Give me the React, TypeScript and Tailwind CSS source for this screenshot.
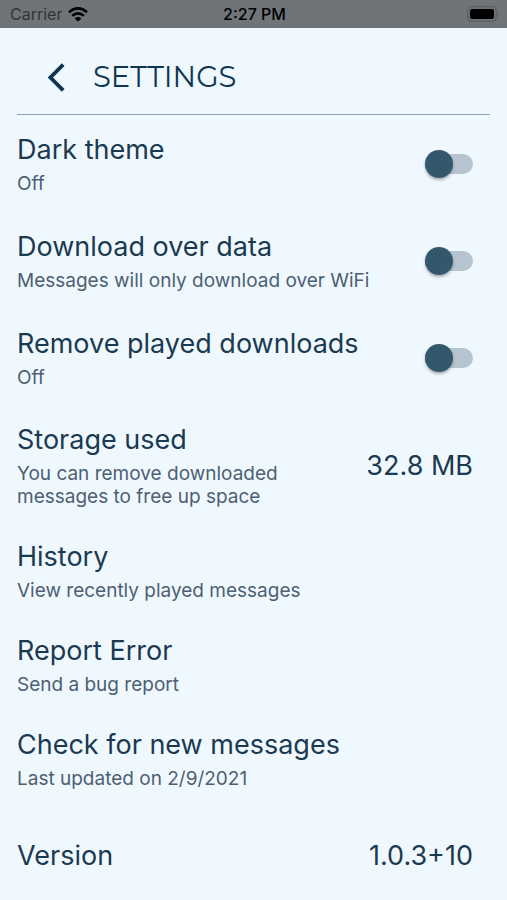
import { useState } from "react";

type RowProps = { title: string; subtitle: string };

function RowText({ title, subtitle }: RowProps) {
  return (
    <span className="flex flex-col gap-1.5">
      <span className="text-[27px] leading-[33px] text-[#1b3a50]">{title}</span>
      <span className="text-[19px] leading-[23px] text-[#4c6072]">{subtitle}</span>
    </span>
  );
}

function SwitchRow({ title, subtitle }: RowProps) {
  const [on, setOn] = useState(false);
  return (
    <label className="flex min-h-[97px] cursor-pointer items-center justify-between gap-4 pr-[17px]">
      <RowText title={title} subtitle={subtitle} />
      <span className="relative flex h-7 w-12 shrink-0 items-center">
        <input
          type="checkbox"
          role="switch"
          checked={on}
          onChange={() => setOn(!on)}
          className="peer h-5 w-full cursor-pointer appearance-none rounded-full bg-[#b5c4cf]"
        />
        <span className="pointer-events-none absolute left-0 size-7 rounded-full bg-[#33586b] shadow-[0_2px_3px_rgba(0,0,0,0.3)] peer-checked:left-5" />
      </span>
    </label>
  );
}

function ActionRow({ title, subtitle }: RowProps) {
  return (
    <button type="button" className="block w-full cursor-pointer py-4 text-left">
      <RowText title={title} subtitle={subtitle} />
    </button>
  );
}

function StatusBar() {
  return (
    <div className="grid h-7 grid-cols-3 items-center bg-[#6e7477] pr-2 pl-2.5 text-base">
      <div className="flex items-center gap-1.5 text-[#303436]">
        <span>Carrier</span>
        <svg viewBox="0 0 20 15" className="h-[15px] w-5" aria-label="Wi-Fi" fill="none" stroke="#000" strokeWidth="2.6">
          <path d="M1 5.2 Q10 -2.4 19 5.2" />
          <path d="M4.2 8.8 Q10 3.8 15.8 8.8" />
          <path d="M6.7 11.4 Q10 8.5 13.3 11.4 L10 14.7 Z" fill="#000" stroke="none" />
        </svg>
      </div>
      <span className="text-center font-medium text-black">2:27 PM</span>
      <svg viewBox="0 0 33 16" className="h-4 w-[33px] justify-self-end" aria-label="Battery">
        <rect x="1.6" y="0.7" width="28.6" height="14.6" rx="4" fill="none" stroke="#5a5f61" strokeWidth="1.2" />
        <rect x="4" y="3" width="24" height="10" rx="2" fill="#000" />
        <path d="M31.4 5.8 Q32.8 6.6 32.8 8 Q32.8 9.4 31.4 10.2 Z" fill="#5a5f61" />
      </svg>
    </div>
  );
}

export default function App() {
  return (
    <div className="min-h-screen bg-[#f0f8ff] font-['Inter',sans-serif]">
      <StatusBar />
      <main className="px-[17px]">
        <header className="flex h-[87px] items-center gap-[18px] border-b border-[#90a4b0] pt-3 pl-5">
          <button type="button" aria-label="Back" className="flex h-10 w-[38px] cursor-pointer items-center justify-center">
            <svg viewBox="0 0 20 30" className="h-[30px] w-5" fill="none" stroke="#0f3550" strokeWidth="3.8" strokeLinecap="butt" strokeLinejoin="miter">
              <path d="M17.2 2.6 L4.4 15.5 L17.2 28.4" />
            </svg>
          </button>
          <h1 className="font-['Montserrat','Inter',sans-serif] text-[29px] leading-9 text-[#0f3550]">SETTINGS</h1>
        </header>
        <SwitchRow title="Dark theme" subtitle="Off" />
        <SwitchRow title="Download over data" subtitle="Messages will only download over WiFi" />
        <SwitchRow title="Remove played downloads" subtitle="Off" />
        <div className="flex items-center justify-between pt-[17px] pr-[17px] pb-4">
          <div className="max-w-[290px]">
            <RowText title="Storage used" subtitle="You can remove downloaded messages to free up space" />
          </div>
          <span className="text-[27px] leading-[33px] text-[#1b3a50]">32.8 MB</span>
        </div>
        <ActionRow title="History" subtitle="View recently played messages" />
        <ActionRow title="Report Error" subtitle="Send a bug report" />
        <ActionRow title="Check for new messages" subtitle="Last updated on 2/9/2021" />
        <div className="flex h-[94px] items-center justify-between pt-1 pr-[17px] text-[27px] leading-[33px] text-[#1b3a50]">
          <span>Version</span>
          <span>1.0.3+10</span>
        </div>
      </main>
    </div>
  );
}
